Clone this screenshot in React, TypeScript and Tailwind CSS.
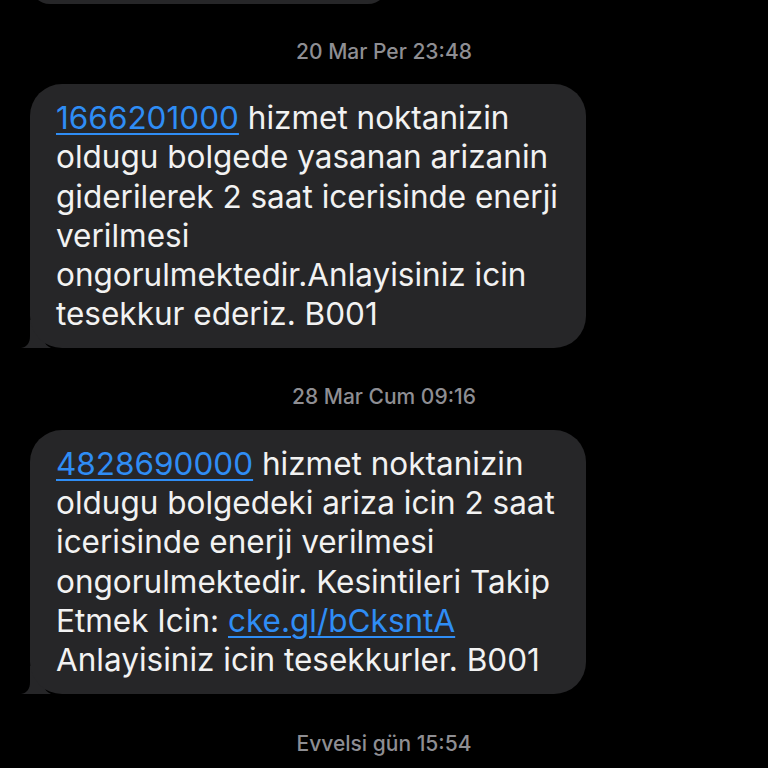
import React from "react";

const font = { fontFamily: "Inter, 'Noto Sans', 'Liberation Sans', sans-serif" };

function Tail() {
  return (
    <svg
      className="absolute left-[-9px] bottom-0"
      width="30"
      height="28"
      viewBox="0 0 30 28"
    >
      <path
        d="M9 0 L24 0 L24 22 C24 24 26 26 30 28 L0 28 C6 27 9 23 9 16 Z"
        fill="#262628"
      />
    </svg>
  );
}

function Link({ children }: { children: React.ReactNode }) {
  return (
    <span className="text-[#2f8df5] underline decoration-[2px] underline-offset-[4px]">
      {children}
    </span>
  );
}

function Bubble({ children }: { children: React.ReactNode }) {
  return (
    <div className="relative ml-[30px] w-[556px]">
      <Tail />
      <div className="relative rounded-[32px] bg-[#262628] pl-[26px] pr-[10px] pt-[14px] pb-[14px] text-[31.5px] leading-[39.3px] text-[#f2f2f2] tracking-[0px] whitespace-nowrap">
        {children}
      </div>
    </div>
  );
}

function Stamp({ children }: { children: React.ReactNode }) {
  return (
    <div className="text-center text-[21px] leading-[24px] text-[#8e8e93] font-medium">
      {children}
    </div>
  );
}

export default function App() {
  return (
    <div className="w-[768px] h-[768px] overflow-hidden bg-black" style={font}>
      <div className="ml-[30px] mt-[-36px] h-[40px] w-[358px] rounded-[32px] bg-[#262628]" />
      <div className="mt-[36px]">
        <Stamp>20 Mar Per 23:48</Stamp>
      </div>
      <div className="mt-[20px]">
        <Bubble>
          <div>
            <Link>1666201000</Link> hizmet noktanizin
          </div>
          <div>oldugu bolgede yasanan arizanin</div>
          <div>giderilerek 2 saat icerisinde enerji</div>
          <div>verilmesi</div>
          <div>ongorulmektedir.Anlayisiniz icin</div>
          <div>tesekkur ederiz. B001</div>
        </Bubble>
      </div>
      <div className="mt-[37px]">
        <Stamp>28 Mar Cum 09:16</Stamp>
      </div>
      <div className="mt-[21px]">
        <Bubble>
          <div>
            <Link>4828690000</Link> hizmet noktanizin
          </div>
          <div>oldugu bolgedeki ariza icin 2 saat</div>
          <div>icerisinde enerji verilmesi</div>
          <div>ongorulmektedir. Kesintileri Takip</div>
          <div>
            Etmek Icin: <Link>cke.gl/bCksntA</Link>
          </div>
          <div>Anlayisiniz icin tesekkurler. B001</div>
        </Bubble>
      </div>
      <div className="mt-[38px]">
        <Stamp>Evvelsi gün 15:54</Stamp>
      </div>
    </div>
  );
}
